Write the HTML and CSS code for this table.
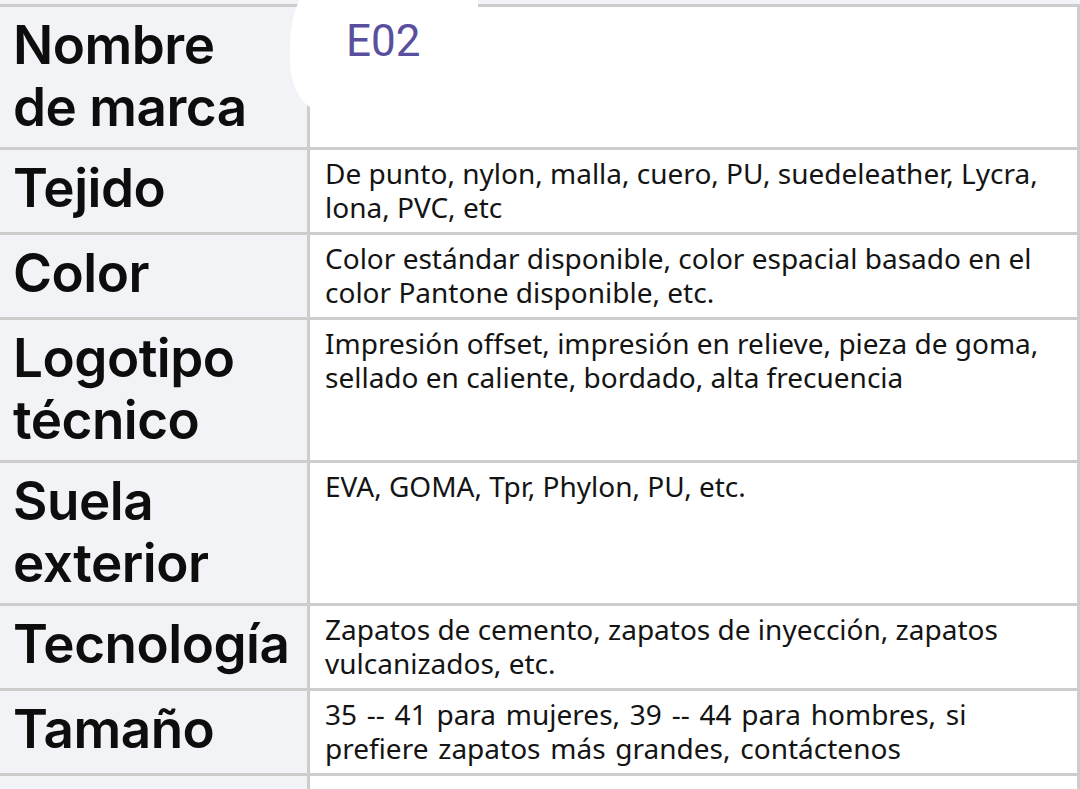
FILE: index.html
```html
<!DOCTYPE html>
<html lang="es">
<head>
<meta charset="utf-8">
<title>Especificaciones</title>
<link rel="stylesheet" href="styles.css">
</head>
<body>
<div class="sheet">
  <div class="blob"></div>
  <div class="row">
    <div class="label">Nombre<br>de marca</div>
    <div class="value"><span class="brand">E02</span></div>
  </div>
  <div class="row">
    <div class="label">Tejido</div>
    <div class="value">De punto, nylon, malla, cuero, PU, suedeleather, Lycra, lona, PVC, etc</div>
  </div>
  <div class="row">
    <div class="label">Color</div>
    <div class="value">Color estándar disponible, color espacial basado en el color Pantone disponible, etc.</div>
  </div>
  <div class="row">
    <div class="label">Logotipo<br>técnico</div>
    <div class="value">Impresión offset, impresión en relieve, pieza de goma, sellado en caliente, bordado, alta frecuencia</div>
  </div>
  <div class="row">
    <div class="label">Suela<br>exterior</div>
    <div class="value">EVA, GOMA, Tpr, Phylon, PU, etc.</div>
  </div>
  <div class="row">
    <div class="label">Tecnología</div>
    <div class="value">Zapatos de cemento, zapatos de inyección, zapatos vulcanizados, etc.</div>
  </div>
  <div class="row">
    <div class="label">Tamaño</div>
    <div class="value value-sizes">35 -- 41 para mujeres, 39 -- 44 para hombres, si prefiere zapatos más grandes, contáctenos</div>
  </div>
  <div class="row">
    <div class="label"></div>
    <div class="value"></div>
  </div>
</div>
</body>
</html>
```
FILE: styles.css
```css
html, body {
  margin: 0;
  padding: 0;
}
body {
  background: #f2f3f7;
  width: 1080px;
  height: 789px;
  overflow: hidden;
}
.sheet {
  position: relative;
  padding-top: 4px;
}
.blob {
  position: absolute;
  left: 290px;
  top: -25px;
  width: 188px;
  height: 135px;
  background: #ffffff;
  border-radius: 40px 14px 0 30px / 70px 14px 0 50px;
  z-index: 2;
}
.row {
  display: grid;
  grid-template-columns: 307px 767px;
  column-gap: 3px;
  border-top: 3px solid #cdcdcd;
  border-right: 3px solid #cdcdcd;
  background: #cdcdcd;
}
.label {
  background: #f2f3f7;
  font-family: Inter, Lato, "Liberation Sans", sans-serif;
  font-weight: 600;
  font-size: 53px;
  line-height: 62px;
  letter-spacing: -0.5px;
  font-variant-ligatures: none;
  color: #0d0d0d;
  padding: 7px 10px 9px 13px;
}
.value {
  background: #ffffff;
  font-family: "Noto Sans", "Open Sans", sans-serif;
  font-size: 28px;
  line-height: 34px;
  color: #141414;
  padding: 6px 15px 8px 15px;
  min-height: 68px;
}
.value-sizes {
  word-spacing: 2.5px;
}
.brand {
  position: relative;
  z-index: 3;
  display: inline-block;
  font-family: Roboto, "Liberation Sans", sans-serif;
  font-size: 44px;
  line-height: 54px;
  color: #5a4f9f;
  padding: 1px 0 0 21px;
}
```
